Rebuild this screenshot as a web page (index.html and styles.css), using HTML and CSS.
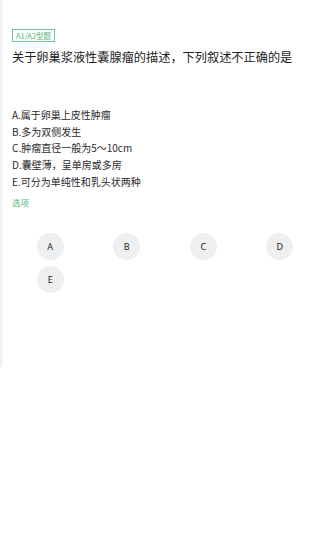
FILE: index.html
```html
<!DOCTYPE html>
<html lang="zh">
<head>
    <meta charset="UTF-8" />
    <meta name="viewport" content="width=device-width, initial-scale=1.0" />
    <title>题目</title>
    <link rel="stylesheet" href="styles.css">
</head>
<body>
    <div class="question-page">
        <span class="type-tag">A1/A2型题</span>
        <h1 class="question-title">关于卵巢浆液性囊腺瘤的描述，下列叙述不正确的是</h1>

        <ul class="option-list">
            <li>A.属于卵巢上皮性肿瘤</li>
            <li>B.多为双侧发生</li>
            <li>C.肿瘤直径一般为5～10cm</li>
            <li>D.囊壁薄，呈单房或多房</li>
            <li>E.可分为单纯性和乳头状两种</li>
        </ul>

        <p class="section-label">选项</p>

        <div class="answer-grid">
            <div class="answer-cell"><button class="answer-btn">A</button></div>
            <div class="answer-cell"><button class="answer-btn">B</button></div>
            <div class="answer-cell"><button class="answer-btn">C</button></div>
            <div class="answer-cell"><button class="answer-btn">D</button></div>
            <div class="answer-cell"><button class="answer-btn">E</button></div>
        </div>
    </div>
</body>
</html>
```

FILE: styles.css
```css
body {
    margin: 0;
    background-color: #fff;
    font-family: "Noto Sans CJK SC", "Noto Sans", sans-serif;
    color: #333;
}

.question-page {
    height: 367px;
    box-sizing: border-box;
    padding: 29px 12px 0;
    background: linear-gradient(to right, #ebebeb 0, #f7f7f7 2px, #fff 4px);
}

.type-tag {
    display: block;
    width: fit-content;
    font-size: 7.5px;
    line-height: 11px;
    padding: 0 3px;
    border: 1px solid #6cc797;
    color: #55b583;
}

.question-title {
    margin: 7px 0 0;
    font-size: 12.2px;
    line-height: 16px;
    font-weight: normal;
    color: #222;
}

.option-list {
    list-style: none;
    margin: 42px 0 0;
    padding: 0;
    font-size: 10px;
    line-height: 16.7px;
    color: #2a2a2a;
}

.section-label {
    margin: 5px 0 0;
    font-size: 8.5px;
    line-height: 12px;
    color: #4db37c;
}

.answer-grid {
    display: grid;
    grid-template-columns: repeat(4, 1fr);
    row-gap: 6px;
    margin-top: 25px;
}

.answer-cell {
    display: flex;
    justify-content: center;
}

.answer-btn {
    width: 27px;
    height: 27px;
    border: none;
    border-radius: 50%;
    padding: 0;
    background-color: #eeeff1;
    color: #222;
    font-family: "Noto Sans", sans-serif;
    font-size: 9px;
}
```
